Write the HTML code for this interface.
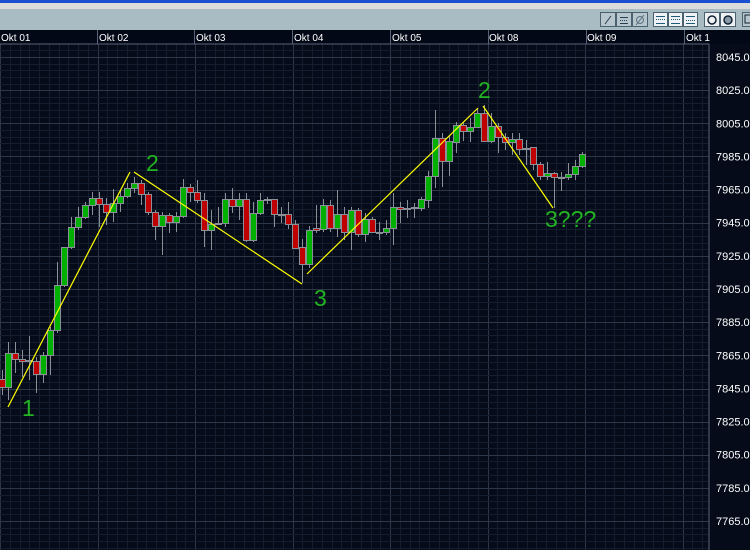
<!DOCTYPE html>
<html><head><meta charset="utf-8"><style>
body{margin:0;width:750px;height:550px;overflow:hidden;background:#050b18;font-family:"Liberation Sans",sans-serif}
#top{position:absolute;left:0;top:0;width:750px;height:3px;background:#1a4fd0}
#g{position:absolute;left:0;top:3px;width:750px;height:6px;background:#dcdcdc}
#tb{position:absolute;left:0;top:9px;width:750px;height:21px;background:#a9bcc4}
.bt{position:absolute;top:3px;height:15px;border:1px solid #4a6270;background:#b6c6cc;box-sizing:border-box}
.bw{background:#eef2f4}
svg{position:absolute;left:0;top:0}
.lab{font-size:11px;fill:#fff}
.hd{font-size:10px;fill:#fff}
.wv{font-size:23px;fill:#22b422}
</style></head><body>
<div id="top"></div><div id="g"></div>
<div id="tb">
<div class="bt" style="left:600px;width:16px"></div>
<div class="bt" style="left:616px;width:16px"></div>
<div class="bt" style="left:632px;width:16px"></div>
<div class="bt bw" style="left:653px;width:15px"></div>
<div class="bt bw" style="left:668px;width:15px"></div>
<div class="bt bw" style="left:683px;width:15px"></div>
<div class="bt bw" style="left:704px;width:16px"></div>
<div class="bt bw" style="left:720px;width:16px"></div>
<div class="bt" style="left:742px;width:12px"></div>
</div>
<svg width="750" height="550" id="s">
<g stroke="#2a4050" fill="none" stroke-width="1">
<line x1="605" y1="24" x2="611" y2="16"/>
<line x1="620" y1="17.5" x2="628" y2="17.5"/><line x1="620" y1="20.5" x2="628" y2="20.5" stroke-dasharray="1,1"/><line x1="620" y1="23.5" x2="628" y2="23.5"/>
<circle cx="640" cy="20" r="3.5" stroke="#5a7080"/><line x1="636" y1="25" x2="644" y2="15" stroke="#5a7080"/>
<g stroke="#1e5a78"><line x1="656" y1="16.5" x2="665" y2="16.5"/><line x1="656" y1="19.5" x2="665" y2="19.5" stroke-dasharray="1,1"/><line x1="656" y1="23.5" x2="665" y2="23.5"/>
<line x1="671" y1="16.5" x2="680" y2="16.5"/><line x1="671" y1="19.5" x2="680" y2="19.5" stroke-dasharray="1,1"/><line x1="671" y1="23.5" x2="680" y2="23.5"/>
<line x1="686" y1="16.5" x2="695" y2="16.5"/><line x1="686" y1="20.5" x2="695" y2="20.5" stroke-dasharray="1,1"/><line x1="686" y1="23.5" x2="695" y2="23.5"/></g>
<circle cx="712" cy="20" r="4" stroke="#123" stroke-width="1.5"/><circle cx="728" cy="20" r="4" stroke="#123" stroke-width="1.5" fill="#8899aa"/>
<rect x="745" y="15" width="6" height="8" stroke="#123"/>
</g>
<rect x="0" y="30" width="750" height="14" fill="#030816"/>
<g id="grid"></g>
<rect x="-1" y="44" width="710" height="520" fill="none" stroke="#5a6478"/>
<g id="c"></g>
<g stroke="#ffff00" stroke-width="1.2" fill="none">
<line x1="8" y1="407" x2="130" y2="172"/>
<line x1="134" y1="172" x2="302" y2="284"/>
<line x1="307" y1="274" x2="478" y2="108"/>
<line x1="483" y1="106" x2="553" y2="208"/>
</g>
<text class="wv" x="22" y="416">1</text>
<text class="wv" x="146" y="171">2</text>
<text class="wv" x="314" y="306">3</text>
<text class="wv" x="478" y="98">2</text>
<text class="wv" x="545" y="227">3???</text>
<g class="hd">
<text x="1" y="41">Okt 01</text><text x="99" y="41">Okt 02</text><text x="196" y="41">Okt 03</text>
<text x="294" y="41">Okt 04</text><text x="392" y="41">Okt 05</text><text x="489" y="41">Okt 08</text>
<text x="587" y="41">Okt 09</text><text x="686" y="41">Okt 1</text>
</g>
<g class="lab" id="ax"></g>
</svg>
<script>
var ns="http://www.w3.org/2000/svg";
function el(p,t,a,tx){var e=document.createElementNS(ns,t);for(var k in a)e.setAttribute(k,a[k]);if(tx)e.textContent=tx;p.appendChild(e);return e}
var gr=document.getElementById('grid');
for(var i=0;i<80;i++){var x=Math.round(i*9.75)+0.5;if(x>709)break;el(gr,'line',{x1:x,y1:44,x2:x,y2:550,stroke:i%10==0?'#2e3748':'#141d2e'});}
for(var i=0;i<80;i++){var y=Math.round(57+(i-2)*6.63)+0.5;if(y<45)continue;if(y>550)break;el(gr,'line',{x1:0,y1:y,x2:709,y2:y,stroke:(i-2)%5==0?'#2e3748':'#141d2e'});}
for(var d=0;d<8;d++){var x=[97,194,292,390,488,586,684][d];if(x)el(gr,'line',{x1:x+.5,y1:30,x2:x+.5,y2:44,stroke:'#5a6478'});}
var ax=document.getElementById('ax');
for(var i=0;i<15;i++){el(ax,'text',{x:716,y:61+i*33.14},(8045-20*i)+'.0');}
var C=[[2,379,387,370,395],[8,387,353,342,400],[15,353,359,342,373],[22,359,361,350,377],[29,360,361,336,380],[36,361,374,357,393],[43,374,355,352,383],[50,355,330,327,375],[57,330,285,262,333],[64,285,247,247,287],[71,247,227,217,249],[78,227,217,207,230],[85,217,205,202,219],[92,205,198,192,215],[99,198,204,192,227],[106,204,212,198,225],[113,212,203,189,222],[120,203,196,190,212],[127,196,188,183,198],[134,188,183,177,193],[141,183,194,180,205],[148,194,212,192,215],[155,212,226,210,240],[162,226,215,212,255],[169,215,222,213,233],[176,222,216,212,232],[183,216,187,179,218],[190,187,192,184,202],[197,192,200,180,203],[204,200,230,193,247],[211,230,224,210,250],[218,223,224,207,225],[225,223,199,193,227],[232,199,206,188,213],[239,206,199,193,220],[246,199,240,193,242],[253,240,213,202,242],[260,213,200,193,215],[267,199,200,197,204],[274,199,214,199,227],[281,214,214,207,223],[288,214,224,202,229],[295,224,248,220,249],[302,247,264,239,283],[309,264,230,226,268],[316,228,230,205,233],[323,229,205,199,232],[330,205,228,200,232],[337,228,214,190,237],[344,214,232,207,240],[351,232,210,207,250],[358,210,234,208,237],[365,234,219,213,242],[372,219,232,217,233],[379,232,232,222,240],[386,232,228,220,235],[393,228,207,193,245],[400,207,209,202,223],[407,208,208,200,218],[414,207,207,203,218],[421,208,199,197,211],[428,200,176,171,208],[435,176,138,110,188],[442,138,161,133,187],[449,161,141,135,176],[456,142,125,122,153],[463,125,131,122,141],[470,131,127,118,142],[477,127,113,108,128],[484,113,141,105,141],[491,141,126,113,143],[498,126,137,123,153],[505,137,142,133,150],[512,142,139,133,155],[519,139,149,133,155],[526,148,148,140,165],[533,147,164,147,170],[540,164,176,162,180],[547,176,173,162,180],[554,173,177,172,208],[561,177,177,172,191],[568,177,174,163,180],[575,174,166,160,180],[582,166,154,152,168]];
var cg=document.getElementById('c');
C.forEach(function(c){var x=c[0],o=c[1],cl=c[2];
el(cg,'line',{x1:x+.5,y1:c[3],x2:x+.5,y2:c[4],stroke:'#8a8f98'});
var t=Math.min(o,cl),h=Math.max(Math.abs(o-cl),1);
el(cg,'rect',{x:x-2.5,y:t+.5,width:6,height:h,fill:cl<o?'#00b000':(cl>o?'#c00000':'#8a8f98'),stroke:'#8a8f98','stroke-width':1});});
</script>
</body></html>
